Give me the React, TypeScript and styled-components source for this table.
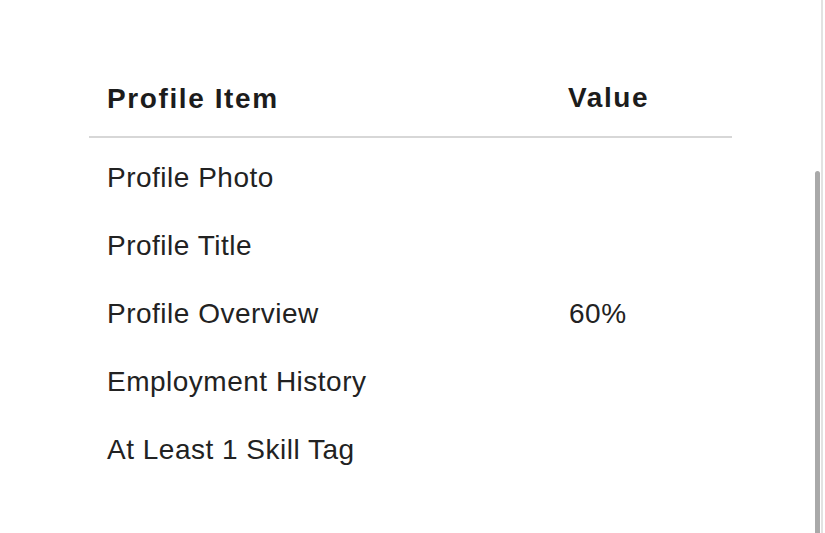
import React from "react";
import styled, { createGlobalStyle } from "styled-components";

const Global = createGlobalStyle`
  html, body { margin: 0; padding: 0; background: #ffffff; }
  body { font-family: "Liberation Sans", Arial, sans-serif; color: #1f1f1f; }
`;

const Page = styled.div`
  display: flex;
  width: 825px;
  height: 533px;
  overflow: hidden;
  background: #ffffff;
`;

const Main = styled.main`
  flex: 1;
  padding: 79px 0 0 89px;
`;

const Table = styled.div`
  width: 643px;
`;

const HeaderRow = styled.div`
  display: grid;
  grid-template-columns: 479px 1fr;
  align-items: start;
  padding-bottom: 17px;
  border-bottom: 2px solid #d7d7d7;
`;

const HeadCell = styled.div<{ $first?: boolean }>`
  font-size: 28px;
  font-weight: 700;
  line-height: ${(p) => (p.$first ? "40px" : "38px")};
  letter-spacing: 1.6px;
  color: #1c1c1c;
  padding-left: ${(p) => (p.$first ? "18px" : "0")};
`;

const Body = styled.div`
  padding-top: 6px;
`;

const Row = styled.div`
  display: grid;
  grid-template-columns: 480px 1fr;
  height: 68px;
`;

const Cell = styled.div<{ $first?: boolean }>`
  font-size: 28px;
  line-height: 68px;
  letter-spacing: 0.5px;
  color: #222222;
  padding-left: ${(p) => (p.$first ? "18px" : "0")};
  white-space: nowrap;
`;

const ScrollGutter = styled.div`
  display: flex;
  gap: 1px;
  padding-right: 2px;
`;

const ThumbLane = styled.div`
  display: flex;
  flex-direction: column;
  width: 5px;
  padding-top: 171px;
`;

const Thumb = styled.div`
  flex: 1;
  border-radius: 3px 3px 0 0;
  background: #a9a9a9;
`;

const Track = styled.div`
  width: 2px;
  background: #e2e2e2;
`;

const rows: { item: string; value: string }[] = [
  { item: "Profile Photo", value: "" },
  { item: "Profile Title", value: "" },
  { item: "Profile Overview", value: "60%" },
  { item: "Employment History", value: "" },
  { item: "At Least 1 Skill Tag", value: "" },
];

export default function App() {
  return (
    <Page>
      <Global />
      <Main>
        <Table>
          <HeaderRow>
            <HeadCell $first>Profile Item</HeadCell>
            <HeadCell>Value</HeadCell>
          </HeaderRow>
          <Body>
            {rows.map((r) => (
              <Row key={r.item}>
                <Cell $first>{r.item}</Cell>
                <Cell>{r.value}</Cell>
              </Row>
            ))}
          </Body>
        </Table>
      </Main>
      <ScrollGutter>
        <ThumbLane>
          <Thumb />
        </ThumbLane>
        <Track />
      </ScrollGutter>
    </Page>
  );
}
